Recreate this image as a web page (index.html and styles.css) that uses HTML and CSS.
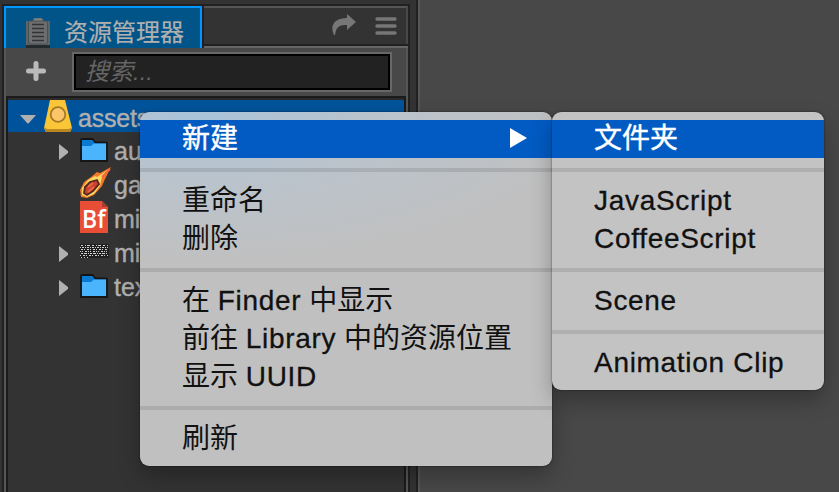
FILE: index.html
```
<!DOCTYPE html>
<html lang="zh-CN">
<head>
<meta charset="utf-8">
<title>资源管理器</title>
<link rel="stylesheet" href="styles.css">
</head>
<body>
<div class="workspace">
  <div class="dock">
    <section class="panel">
      <header class="panel-header">
        <div class="tab">
          <svg class="tab-icon" width="26" height="30" viewBox="0 0 26 30">
            <path d="M0 3h6l2-3h8l2 3h6v24H0z" fill="#5d6568"/>
            <path d="M0 27h24v3H0z" fill="#252a2d"/>
            <rect x="2.500" y="3" width="19" height="23" rx="2" fill="#6c6e6f" stroke="#4a4f51" stroke-width="1"/>
            <path d="M8 1.500h8" stroke="#808485" stroke-width="2"/>
            <path d="M6 6.500h12M6 10.500h12M6 14.500h12M6 18.500h12M6 22.500h12" stroke="#303437" stroke-width="1.700"/>
          </svg>
          <span>资源管理器</span>
        </div>
        <div class="tab-strip">
          <svg width="26" height="24" viewBox="0 0 26 24"><path d="M16 1l9 8-9 8v-5C9 12 5 13 4 22h-1C-2 11 5 5 16 5z" fill="#777"/></svg>
          <svg width="22" height="18" viewBox="0 0 22 18"><path d="M2 2h18M2 9h18M2 16h18" stroke="#777" stroke-width="3.400" stroke-linecap="round"/></svg>
        </div>
      </header>
      <div class="toolbar">
        <svg class="add" width="20" height="20" viewBox="0 0 20 20"><path d="M10 2.500v15M2.500 10h15" stroke="#bababa" stroke-width="5" stroke-linecap="round"/></svg>
        <div class="search"><span>搜索...</span></div>
      </div>
      <div class="tree">
        <div class="row root">
          <svg class="arrow" width="16" height="9" viewBox="0 0 16 9"><path d="M0 0h16L8.500 8.500h-1z" fill="#b0b0b0"/></svg>
          <svg class="asset" width="28" height="32" viewBox="0 0 28 32"><path d="M6 0h15l7 28-2 4H2l-2-4z" fill="#fac536"/><path d="M0 27l2 5h24l2-5-3 2H3z" fill="#ba8720"/><circle cx="14" cy="14.500" r="7.300" fill="#fbc568" stroke="#a47a27" stroke-width="1.800"/></svg>
          <span>assets</span>
        </div>
        <div class="row">
          <svg class="arrow" width="9" height="16" viewBox="0 0 9 16"><path d="M0 0l9 7v2l-9 7z" fill="#b0b0b0"/></svg>
          <svg class="asset folder" width="28" height="26" viewBox="0 0 28 26"><path d="M1 2.500Q1 1 2.500 1h10l3 3.500H26Q27 4.500 27 6v17H1z" fill="#087ad0" stroke="#151515" stroke-width="1.800"/><path d="M2 8h9l3-2.500h12V22H2z" fill="#4ab4fc"/></svg>
          <span>au</span>
        </div>
        <div class="row">
          <svg class="asset fire" width="31" height="32" viewBox="0 0 31 32"><path d="M31 0l-6 12-3 7-8 9-7 3-6-1-1-7 4-8 7-5 6-5 3 1z" fill="#f47627"/><path d="M29 2L17 10l-2-1-7 4-6 8v7l5 2 7-3 6-8 2-9z" fill="#f8d765"/><path d="M5 20l5-5 7-2 2 4-6 7-6 4-3-2z" fill="#c74435" stroke="#56271f" stroke-width="1.800"/><path d="M8 20l5-4M8 25l6-5M30 2l-8 8" stroke="#f1653d" stroke-width="2"/></svg>
          <span>ga</span>
        </div>
        <div class="row">
          <svg class="asset" width="28" height="32" viewBox="0 0 28 32"><path d="M0 0h22l6 6v26H0z" fill="#e84d35"/><path d="M22 0l6 6h-6z" fill="#a83e30"/><text class="font-label" x="2" y="26.500" textLength="23.500" lengthAdjust="spacingAndGlyphs">Bf</text></svg>
          <span>mi</span>
        </div>
        <div class="row">
          <svg class="arrow" width="9" height="16" viewBox="0 0 9 16"><path d="M0 0l9 7v2l-9 7z" fill="#b0b0b0"/></svg>
          <svg class="asset bitmap" width="29" height="14" viewBox="0 0 29 14"><path d="M0 0h29v14H0z" fill="#202020"/><g fill="none" stroke="#d2d2d2"><path d="M1 1.500h27" stroke-dasharray="2 2 1 1 3 2"/><path d="M0 3.500h28" stroke-dasharray="1 1 2 1"/><path d="M1 5.500h27" stroke-dasharray="2 1 1 2"/><path d="M0 7.500h29" stroke-dasharray="1 1 1 2 2 1"/><path d="M1 9.500h27" stroke-dasharray="2 1 3 1 1 1"/><path d="M0 11.500h28" stroke-dasharray="1 2 2 1"/><path d="M1 13.500h8" stroke-dasharray="1 2"/></g></svg>
          <span>mi</span>
        </div>
        <div class="row">
          <svg class="arrow" width="9" height="16" viewBox="0 0 9 16"><path d="M0 0l9 7v2l-9 7z" fill="#b0b0b0"/></svg>
          <svg class="asset folder" width="28" height="26" viewBox="0 0 28 26"><path d="M1 2.500Q1 1 2.500 1h10l3 3.500H26Q27 4.500 27 6v17H1z" fill="#087ad0" stroke="#151515" stroke-width="1.800"/><path d="M2 8h9l3-2.500h12V22H2z" fill="#4ab4fc"/></svg>
          <span>tex</span>
        </div>
      </div>
    </section>
  </div>
  <main class="stage"></main>
</div>

<div class="menu context">
  <div class="item active">新建<svg width="17" height="20" viewBox="0 0 17 20"><path d="M0 0l17 10L0 20z" fill="#fff"/></svg></div>
  <div class="sep"></div>
  <div class="item">重命名</div>
  <div class="item">删除</div>
  <div class="sep"></div>
  <div class="item">在 <span class="latin">Finder</span> 中显示</div>
  <div class="item">前往 <span class="latin">Library</span> 中的资源位置</div>
  <div class="item">显示 <span class="latin">UUID</span></div>
  <div class="sep"></div>
  <div class="item">刷新</div>
</div>
<div class="menu submenu">
  <div class="item active">文件夹</div>
  <div class="sep"></div>
  <div class="item"><span class="latin">JavaScript</span></div>
  <div class="item"><span class="latin">CoffeeScript</span></div>
  <div class="sep"></div>
  <div class="item"><span class="latin">Scene</span></div>
  <div class="sep"></div>
  <div class="item"><span class="latin">Animation Clip</span></div>
</div>
</body>
</html>
```
FILE: styles.css
```
* { box-sizing: border-box; }
body {
  margin: 0;
  width: 839px;
  height: 492px;
  overflow: hidden;
  position: relative;
  background: #333;
  font-family: "Liberation Sans", "Noto Sans CJK SC", sans-serif;
}
svg { display: block; flex: none; }
.workspace { display: flex; height: 492px; }
.dock { width: 416px; padding: 4px 6px 0 2px; background: #333; }
.panel {
  height: 500px;
  border: 2px solid #212121;
  display: flex;
  flex-direction: column;
}
.stage {
  flex: 1;
  background: #484848;
  border-left: 2px solid #212121;
  box-shadow: inset 2px 0 #565656;
}
.panel-header { display: flex; height: 42px; flex: none; background: #212121; }
.tab {
  width: 198px;
  border: 2px solid #0096ff;
  border-bottom: 0;
  background: #005488;
  display: flex;
  padding: 10px 0 0 20px;
  gap: 12px;
  color: #b0b0b0;
  font-size: 24px;
  line-height: 30px;
  white-space: nowrap;
}
.tab span { -webkit-text-stroke: .2px; }
.tab-strip {
  flex: 1;
  height: 38px;
  margin-left: 2px;
  border-top: 2px solid #555;
  border-right: 2px solid #484848;
  background: #333;
  display: flex;
  justify-content: flex-end;
  align-items: flex-start;
  gap: 18px;
  padding: 5px 9px 0 0;
  box-shadow: 0 2px #212121, 0 4px #666;
}
.tab-strip svg:last-child { margin-top: 4px; }
.toolbar {
  height: 48px;
  flex: none;
  background: #484848;
  border: solid #565656;
  border-width: 0 2px;
  display: flex;
  padding: 4px 14px 4px 20px;
  gap: 26px;
}
.add { margin-top: 9px; }
.search {
  flex: 1;
  height: 40px;
  border: 2px solid #686868;
  box-shadow: inset 0 0 0 2px #000;
  background: #222;
  padding: 1px 0 0 11px;
  color: #656565;
  font-size: 24px;
  line-height: 34px;
  font-style: italic;
}
.tree {
  flex: 1;
  border: solid #565656;
  border-width: 0 2px;
  box-shadow: inset 0 0 0 2px #1b1b1b;
  padding: 2px 2px 0;
  background: #333;
}
.row {
  height: 34px;
  display: flex;
  align-items: center;
  padding-left: 51px;
  color: #b0b0b0;
  font-size: 25px;
  white-space: nowrap;
}
.row .arrow { margin: 5px 12px 0 0; }
.row .asset { margin-right: 6px; }
.row .folder { margin-top: 4px; }
.row span { margin-top: 5px; -webkit-text-stroke: .4px; }
.row .asset:first-child { margin-left: 21px; }
.row .fire { margin-right: 3px; }
.row .bitmap { margin: 0 5px 0 0; }
.row.root {
  padding-left: 12px;
  background: #00539b;
  border-top: 2px solid #2b2b2b;
}
.root .arrow { margin: 7px 8px 0 0; }
.root span { margin-top: 4px; letter-spacing: -.2px; }
.row .font-label { font: 600 26px "Open Sans", sans-serif; fill: #fff; }

.menu {
  position: absolute;
  top: 112px;
  padding: 8px 0;
  border-radius: 9px;
  font-size: 28px;
  color: #111;
  box-shadow: 0 10px 22px rgba(0,0,0,.28), 0 0 2px rgba(0,0,0,.6);
}
.context {
  left: 140px;
  width: 412px;
  background: radial-gradient(ellipse 390px 150px at 65px 0, #a9c3da, rgba(184,196,208,.75) 45%, rgba(193,193,193,0)), #c0c0c0;
}
.submenu { left: 552px; width: 272px; background: #c3c3c3; }
.item {
  height: 38px;
  line-height: 38px;
  padding-left: 42px;
  white-space: nowrap;
}
.active {
  background: #025bc3;
  color: #fff;
  -webkit-text-stroke: .4px;
  display: flex;
  justify-content: space-between;
  padding-right: 25px;
}
.active svg { margin-top: 8px; }
.sep { height: 4px; margin: 10px 0; background: rgba(0,0,0,.1); }
.latin { letter-spacing: .7px; -webkit-text-stroke: .3px; }
```
